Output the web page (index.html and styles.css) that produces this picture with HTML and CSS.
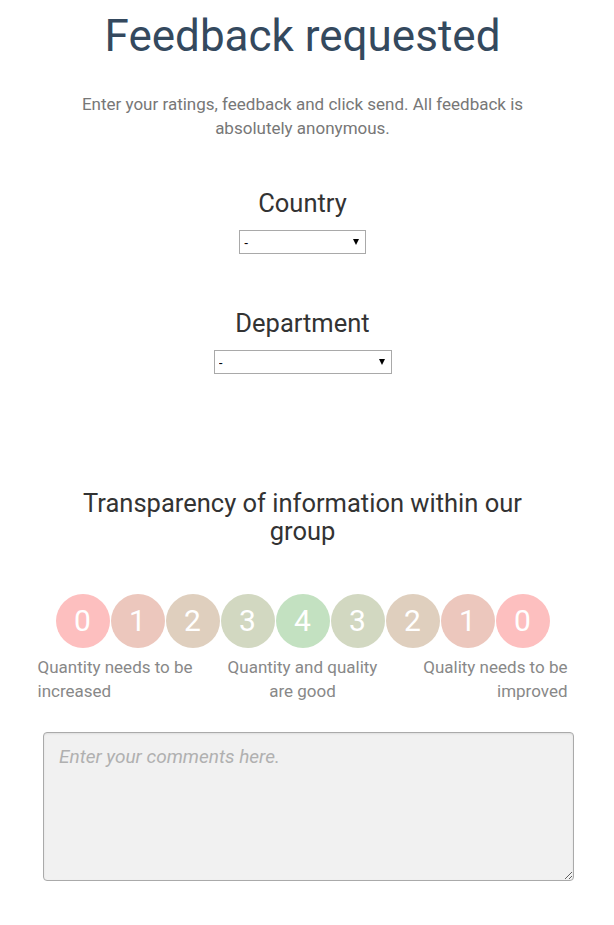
FILE: index.html
```html
<!DOCTYPE html>
<html>
<head>
<meta charset="utf-8">
<title>Feedback requested</title>
<link rel="stylesheet" href="styles.css">
</head>
<body>

<div class="page">
	<h1 class="title">Feedback requested</h1>
	<p class="intro">Enter your ratings, feedback and click send. All feedback is absolutely anonymous.</p>

	<div class="field">
		<h2 class="field-label">Country</h2>
		<span class="pick pick-country">
			<select><option>-</option></select>
		</span>
	</div>

	<div class="field field-dept">
		<h2 class="field-label">Department</h2>
		<span class="pick pick-dept">
			<select><option>-</option></select>
		</span>
	</div>

	<div class="question">
		<h2 class="question-title">Transparency of information within our group</h2>

		<div class="scale">
			<span class="dot d0">0</span>
			<span class="dot d1">1</span>
			<span class="dot d2">2</span>
			<span class="dot d3">3</span>
			<span class="dot d4">4</span>
			<span class="dot d3">3</span>
			<span class="dot d2">2</span>
			<span class="dot d1">1</span>
			<span class="dot d0">0</span>
		</div>

		<div class="legend">
			<span class="legend-left">Quantity needs to be increased</span>
			<span class="legend-mid">Quantity and quality are good</span>
			<span class="legend-right">Quality needs to be improved</span>
		</div>

		<div class="comment-wrap">
			<textarea class="comment" placeholder="Enter your comments here."></textarea>
		</div>
	</div>
</div>

</body>
</html>
```

FILE: styles.css
```css
html {
	background: #fff;
}

body {
	margin: 0;
	font-family: Roboto, "Liberation Sans", Arial, sans-serif;
}

.page {
	width: 605px;
	text-align: center;
	padding-top: 9px;
}

.title {
	margin: 0;
	font-size: 44px;
	font-weight: 400;
	line-height: 54px;
	color: #34495e;
}

.intro {
	width: 470px;
	margin: 29px auto 0;
	font-size: 17px;
	line-height: 24px;
	color: #777;
}

.field {
	margin-top: 49px;
}
.field-dept {
	margin-top: 55px;
}

.field-label {
	margin: 0 0 13px;
	font-size: 25.5px;
	font-weight: 400;
	line-height: 28px;
	color: #333;
}

.pick {
	position: relative;
	display: inline-block;
	vertical-align: top;
}
.pick select {
	-webkit-appearance: none;
	appearance: none;
	display: block;
	height: 24px;
	margin: 0;
	padding: 0 0 0 4px;
	border: 1px solid #a9a9a9;
	border-radius: 0;
	background: #fff;
	font-family: Arial, "Liberation Sans", sans-serif;
	font-size: 13px;
	color: #000;
}
.pick::after {
	content: "";
	position: absolute;
	right: 7px;
	top: 9px;
	border-left: 3px solid transparent;
	border-right: 3px solid transparent;
	border-top: 6px solid #000;
	pointer-events: none;
}
.pick-country select {
	width: 127px;
}
.pick-dept select {
	width: 178px;
}

.question {
	margin-top: 115px;
}

.question-title {
	width: 470px;
	margin: 0 auto;
	font-size: 25.5px;
	font-weight: 400;
	line-height: 28px;
	color: #333;
}

.scale {
	display: flex;
	justify-content: center;
	gap: 1px;
	margin-top: 49px;
}

.dot {
	width: 54px;
	height: 54px;
	border-radius: 50%;
	color: #fff;
	font-size: 30px;
	line-height: 54px;
}
.d0 { background: #fdbfbf; }
.d1 { background: #ecc7bd; }
.d2 { background: #dfcfbe; }
.d3 { background: #d2d8c1; }
.d4 { background: #c3e1c1; }

.legend {
	display: grid;
	grid-template-columns: 1fr 1fr 1fr;
	width: 530px;
	margin: 7px auto 0;
	font-size: 17px;
	line-height: 24px;
	color: #888;
}
.legend-left {
	text-align: left;
	padding-right: 12px;
}
.legend-mid {
	text-align: center;
	padding: 0 8px;
}
.legend-right {
	text-align: right;
	padding-left: 12px;
}

.comment-wrap {
	text-align: left;
	padding: 29px 0 0 43px;
}

.comment {
	display: block;
	box-sizing: border-box;
	width: 531px;
	height: 149px;
	margin: 0;
	padding: 12px 15px;
	border: 1px solid #aaa;
	border-radius: 4px;
	background: #f1f1f1;
	box-shadow: inset 0 1px 2px rgba(0, 0, 0, 0.08);
	font-family: Roboto, "Liberation Sans", Arial, sans-serif;
	font-size: 19px;
	color: #333;
}
.comment::placeholder {
	color: #b0b0b0;
	font-style: italic;
}
```
